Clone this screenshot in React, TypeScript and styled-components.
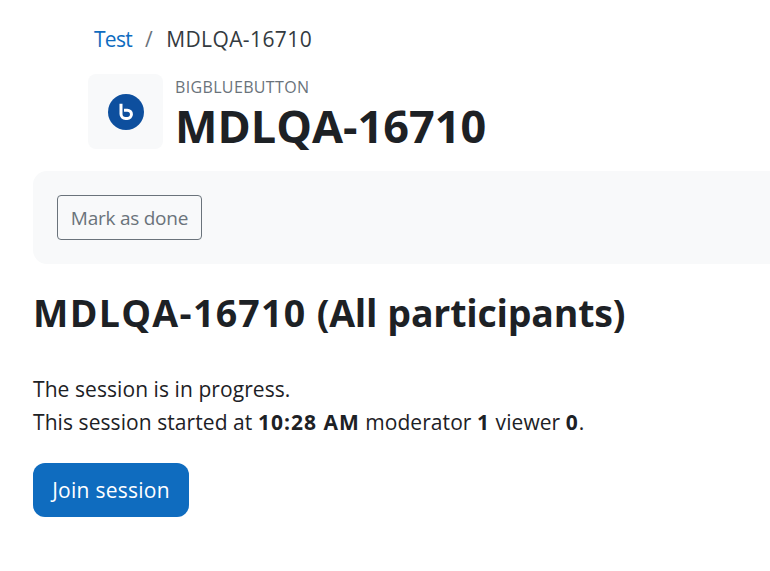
import React from "react";
import styled, { createGlobalStyle } from "styled-components";

const Global = createGlobalStyle`
  html, body { margin: 0; padding: 0; background: #fff; overflow: hidden; }
  body { font-family: "Open Sans", "Noto Sans", "Liberation Sans", sans-serif; color: #1d2125; }
`;
const Page = styled.div`
  width: 770px;
  height: 571px;
  padding: 22px 0 0 33px;
  box-sizing: border-box;
  overflow: hidden;
`;
const Breadcrumb = styled.nav`
  display: flex;
  align-items: center;
  gap: 13px;
  margin-left: 61px;
  height: 34px;
  font-size: 21px;
  color: #343a40;
  letter-spacing: 0.4px;
`;
const Crumb = styled.a`
  color: #0f6cbf;
  letter-spacing: -0.7px;
`;
const Sep = styled.span`
  color: #6a737b;
`;
const Header = styled.header`
  display: flex;
  gap: 12px;
  margin: 18px 0 22px 55px;
`;
const IconTile = styled.div`
  width: 75px;
  height: 75px;
  border-radius: 8px;
  background: #f8f9fa;
  display: flex;
  align-items: center;
  justify-content: center;
`;
const Titles = styled.div`
  display: flex;
  flex-direction: column;
  height: 75px;
`;
const Kicker = styled.div`
  font-size: 16px;
  line-height: 24px;
  margin-top: 1px;
  color: #6a737b;
  letter-spacing: 0.35px;
`;
const Title = styled.h1`
  margin: 0;
  font-size: 45px;
  line-height: 54px;
  font-weight: 700;
  color: #1d2125;
`;
const Panel = styled.div`
  width: 760px;
  height: 93px;
  padding: 24px;
  box-sizing: border-box;
  border-radius: 14px;
  background: #f8f9fa;
`;
const DoneButton = styled.button`
  display: block;
  width: 145px;
  height: 45px;
  padding: 0;
  border: 1px solid #6a737b;
  border-radius: 4px;
  background: transparent;
  color: #6a737b;
  font: 400 19px "Open Sans", sans-serif;
  letter-spacing: -0.25px;
`;
const Heading = styled.h2`
  margin: 26px 0 0;
  font-size: 37.5px;
  line-height: 46px;
  font-weight: 700;
  color: #1d2125;
  letter-spacing: -0.2px;
  word-spacing: 0.5px;
`;
const HeadingCode = styled.span`
  letter-spacing: 1.3px;
`;
const Info = styled.p`
  margin: 37px 0 0;
  font-size: 21px;
  line-height: 33px;
  color: #1d2125;
  letter-spacing: 0.07px;
`;
const Strong = styled.strong`
  font-weight: 700;
  letter-spacing: 1px;
`;
const JoinButton = styled.button`
  display: block;
  width: 156px;
  height: 54px;
  margin-top: 24px;
  padding: 0;
  border: 0;
  border-radius: 12px;
  background: #0f6cbf;
  color: #fff;
  font: 400 21px "Open Sans", sans-serif;
  letter-spacing: 0.25px;
`;

export default function App() {
  return (
    <Page>
      <Global />
      <Breadcrumb>
        <Crumb>Test</Crumb>
        <Sep>/</Sep>
        <span>MDLQA-16710</span>
      </Breadcrumb>
      <Header>
        <IconTile>
          <svg width="36" height="36" viewBox="0 0 36 36" aria-hidden="true">
            <circle cx="18" cy="18" r="18" fill="#0d4f9e" />
            <path d="M13 9.7V20a4.5 4.5 0 0 0 4.5 4.5h1.8a4.15 4.15 0 0 0 0-8.3H16" fill="none" stroke="#fff" strokeWidth="3" />
          </svg>
        </IconTile>
        <Titles>
          <Kicker>BIGBLUEBUTTON</Kicker>
          <Title>MDLQA-16710</Title>
        </Titles>
      </Header>
      <Panel>
        <DoneButton>Mark as done</DoneButton>
      </Panel>
      <Heading>
        <HeadingCode>MDLQA-16710</HeadingCode> (All participants)
      </Heading>
      <Info>
        The session is in progress.
        <br />
        This session started at <Strong>10:28 AM</Strong> moderator <Strong>1</Strong> viewer <Strong>0</Strong>.
      </Info>
      <JoinButton>Join session</JoinButton>
    </Page>
  );
}
